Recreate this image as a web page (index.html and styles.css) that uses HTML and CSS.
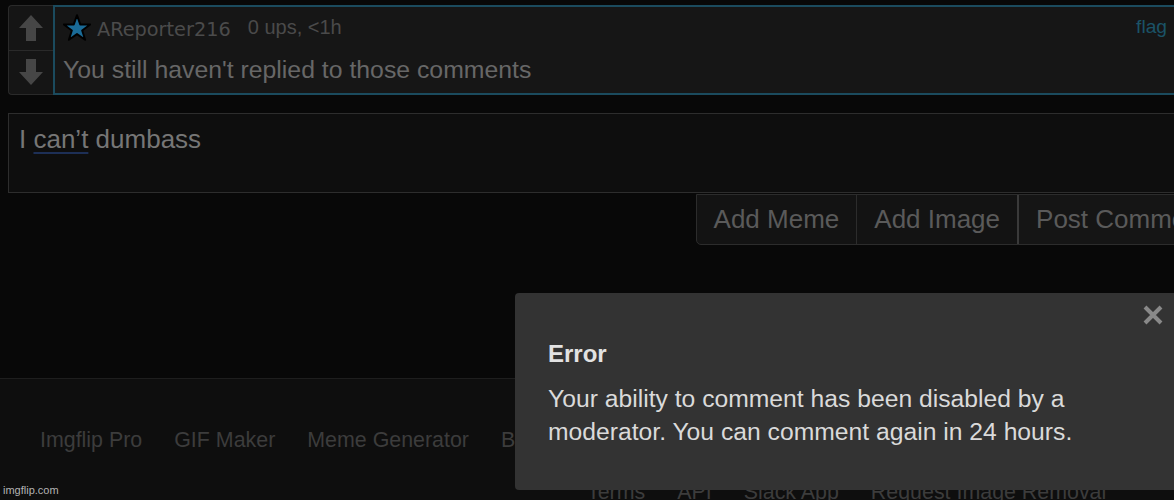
FILE: index.html
```html
<!DOCTYPE html>
<html>
<head>
<meta charset="utf-8">
<link rel="stylesheet" href="styles.css">
</head>
<body>
<div class="page">
  <div class="main">
    <div class="comment">
      <div class="votes">
        <div class="vote vote-up">
          <svg class="arrow" viewBox="0 0 24 26" width="24" height="26"><path d="M12 0 L24 13 H17 V26 H7 V13 H0 Z"/></svg>
        </div>
        <div class="vote">
          <svg class="arrow" viewBox="0 0 24 26" width="24" height="26"><path d="M12 26 L24 13 H17 V0 H7 V13 H0 Z"/></svg>
        </div>
      </div>
      <div class="c-body">
        <div class="c-head">
          <svg class="star" viewBox="0 0 100 96" width="28" height="29"><polygon points="50,4 61.5,37 97,37 68.5,58.5 79,92 50,71.5 21,92 31.5,58.5 3,37 38.5,37"/></svg>
          <span class="user">AReporter216</span>
          <span class="meta">0 ups, &lt;1h</span>
          <span class="flag">flag</span>
        </div>
        <div class="c-text">You still haven't replied to those comments</div>
      </div>
    </div>
    <div class="reply">I <span class="spell">can’t</span> dumbass</div>
    <div class="actions">
      <div class="btn-group">
        <span class="btn">Add Meme</span>
        <span class="btn">Add Image</span>
        <span class="btn btn-post">Post Comment</span>
      </div>
    </div>
  </div>
  <footer class="footer">
    <div class="f-row f-row1">
      <span>Imgflip Pro</span>
      <span>GIF Maker</span>
      <span>Meme Generator</span>
      <span>Blog</span>
      <span>Privacy</span>
    </div>
    <div class="f-row f-row2">
      <span>Terms</span>
      <span>API</span>
      <span>Slack App</span>
      <span>Request Image Removal</span>
    </div>
  </footer>
  <div class="watermark">imgflip.com</div>
  <div class="modal">
    <svg class="close" viewBox="0 0 22 22" width="22" height="22"><path d="M3 3 L19 19 M19 3 L3 19"/></svg>
    <div class="m-title">Error</div>
    <div class="m-text">Your ability to comment has been disabled by a moderator. You can comment again in 24 hours.</div>
  </div>
</div>
</body>
</html>
```
FILE: styles.css
```css
html, body {
  margin: 0;
  padding: 0;
  background: #080808;
  overflow: hidden;
}
body {
  font-family: "Liberation Sans", Arial, sans-serif;
}
.page {
  position: relative;
  width: 1234px;
  height: 500px;
}
.main {
  height: 378px;
  box-sizing: border-box;
  padding: 5px 8px 0 8px;
}
.comment {
  display: flex;
  height: 90px;
}
.votes {
  width: 45px;
  box-sizing: border-box;
  border: 1px solid #2a2a2a;
  border-right: none;
  border-radius: 4px 0 0 4px;
  background: #151515;
  display: flex;
  flex-direction: column;
}
.vote {
  flex: 1;
  display: flex;
  align-items: center;
  justify-content: center;
}
.vote-up {
  border-bottom: 1px solid #2a2a2a;
}
.arrow path {
  fill: #464646;
}
.c-body {
  flex: 1;
  box-sizing: border-box;
  border: 2px solid #1b4b5e;
  background: #161616;
  padding: 0 57px 0 8px;
}
.c-head {
  display: flex;
  align-items: center;
  height: 40px;
}
.star {
  margin-right: 6px;
}
.star polygon {
  fill: #1a6b97;
  stroke: #000;
  stroke-width: 7;
  stroke-linejoin: round;
}
.user {
  font-family: "DejaVu Sans", sans-serif;
  font-size: 19.3px;
  color: #4b4b4b;
  position: relative;
  top: 2px;
}
.meta {
  margin-left: 17px;
  font-size: 20px;
  color: #4a4a4a;
}
.flag {
  margin-left: auto;
  font-size: 19.2px;
  color: #1b5367;
}
.c-text {
  margin-top: 9px;
  font-size: 24.8px;
  line-height: 28px;
  color: #676767;
}
.reply {
  margin-top: 18px;
  height: 80px;
  box-sizing: border-box;
  border: 1px solid #2d2d2d;
  background: #0e0e0e;
  padding: 10px 10px 0 10px;
  font-size: 26px;
  line-height: 30px;
  color: #767676;
}
.spell {
  text-decoration: underline;
  text-decoration-color: #1d2f56;
  text-decoration-thickness: 2px;
  text-underline-offset: 4px;
}
.actions {
  display: flex;
  justify-content: flex-end;
  margin-top: 1px;
}
.btn-group {
  display: flex;
  height: 51px;
  box-sizing: border-box;
  border: 1px solid #2c2c2c;
  border-radius: 0 0 0 5px;
  background: #131313;
}
.btn {
  display: flex;
  align-items: center;
  padding: 0 17px;
  font-size: 26px;
  color: #5a5a5a;
}
.btn + .btn {
  border-left: 1px solid #2c2c2c;
}
.btn.btn-post {
  border-left: 2px solid #3a3a3a;
  background: #151515;
}
.footer {
  border-top: 1px solid #1e1e1e;
  background: #0e0e0e;
  height: 122px;
  box-sizing: border-box;
  padding-top: 49px;
}
.f-row {
  display: flex;
  gap: 32px;
  font-size: 21.4px;
  line-height: 24px;
  color: #3c3c3c;
  white-space: nowrap;
}
.f-row1 {
  padding-left: 40px;
}
.f-row2 {
  padding-left: 587px;
  margin-top: 28px;
}
.watermark {
  position: absolute;
  left: 3px;
  top: 484px;
  font-size: 11px;
  line-height: 12px;
  color: #b3b3b3;
}
.modal {
  position: absolute;
  left: 515px;
  top: 293px;
  width: 680px;
  height: 197px;
  box-sizing: border-box;
  background: #333333;
  border-radius: 4px;
  padding: 47px 0 0 33px;
}
.close {
  position: absolute;
  top: 11px;
  left: 627px;
}
.close path {
  stroke: #898989;
  stroke-width: 4;
  fill: none;
}
.m-title {
  font-weight: bold;
  font-size: 24px;
  line-height: 28px;
  color: #e2e2e2;
}
.m-text {
  margin-top: 14px;
  max-width: 560px;
  font-size: 24.7px;
  line-height: 33px;
  color: #dadada;
}
```
